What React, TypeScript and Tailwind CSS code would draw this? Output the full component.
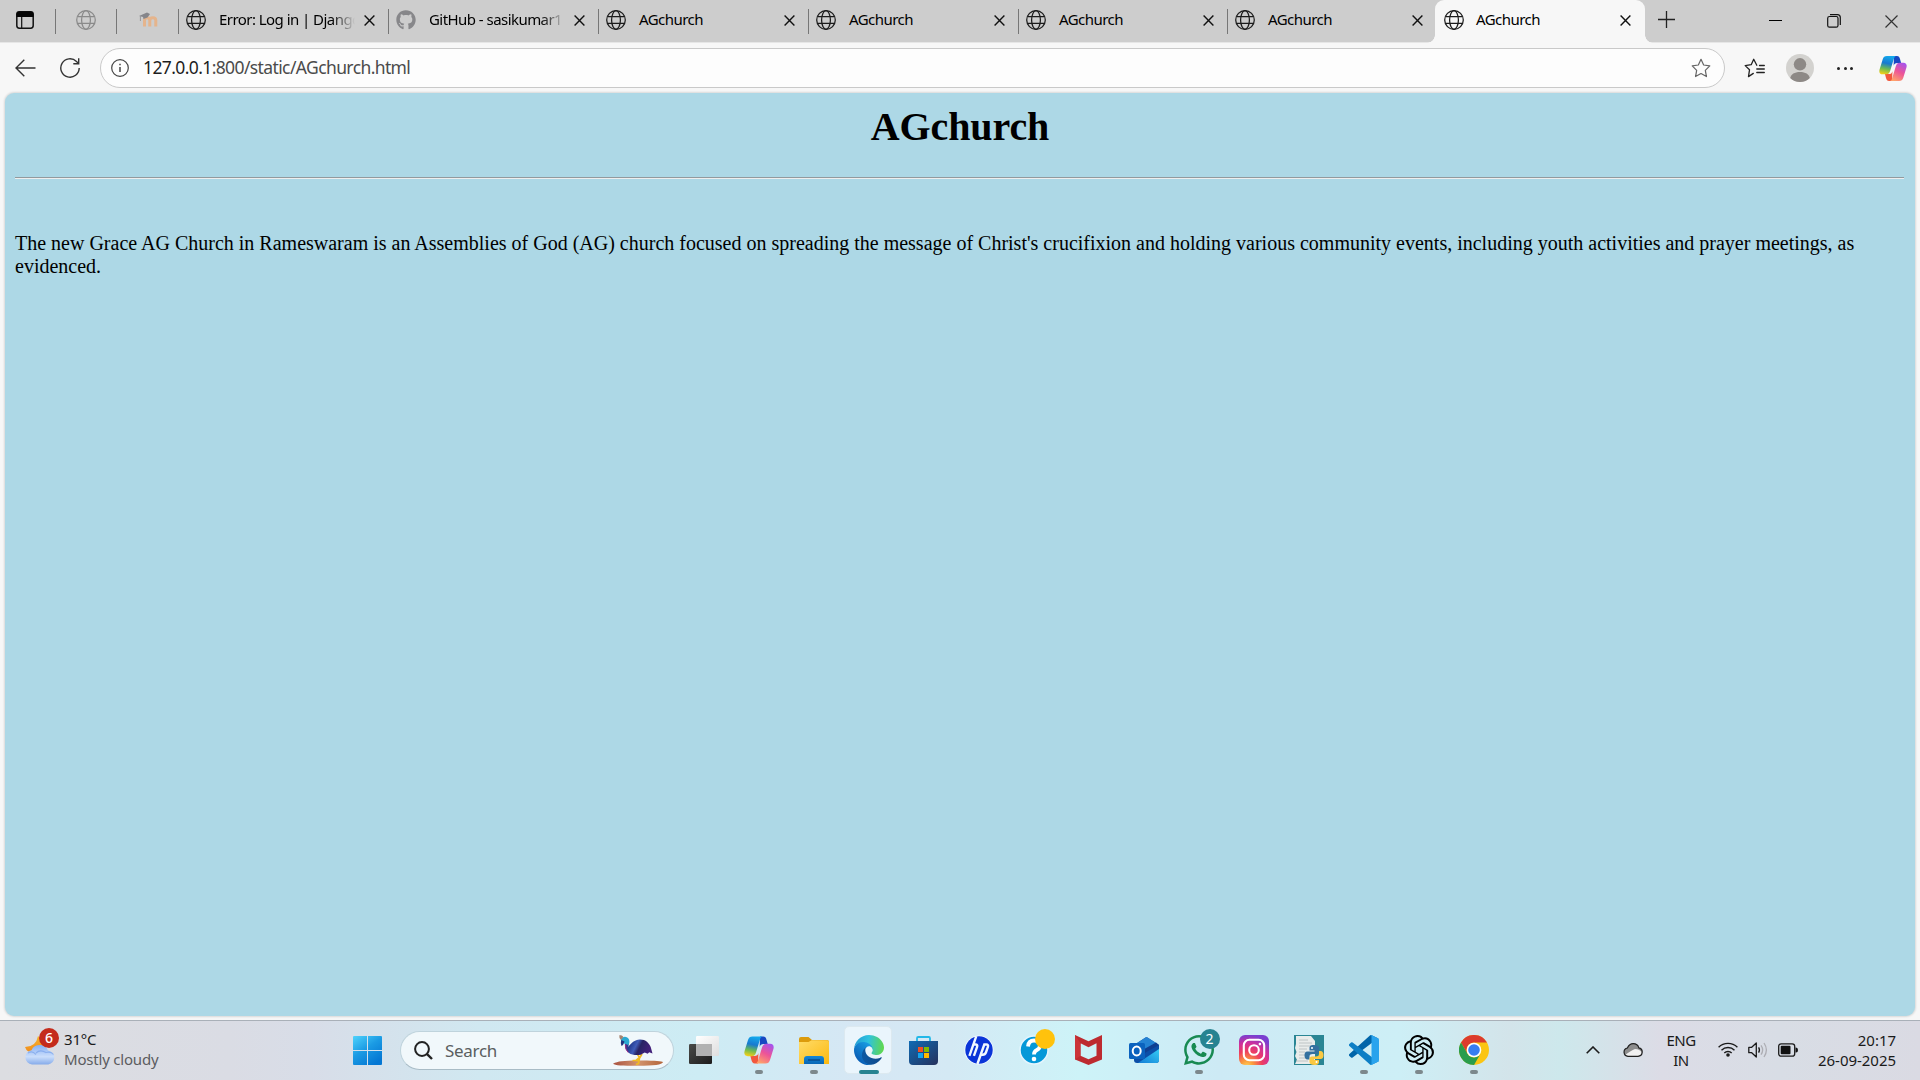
import React from "react";
import { FaGithub, FaWhatsapp } from "react-icons/fa";
import { SiOpenai } from "react-icons/si";

type TabInfo = { title: string; icon: "globe" | "github"; width: string; fade?: boolean };

const tabs: TabInfo[] = [
  { title: "Error: Log in | Django", icon: "globe", width: "w-[210px]", fade: true },
  { title: "GitHub - sasikumar1", icon: "github", width: "w-[210px]", fade: true },
  { title: "AGchurch", icon: "globe", width: "w-[210px]" },
  { title: "AGchurch", icon: "globe", width: "w-[210px]" },
  { title: "AGchurch", icon: "globe", width: "w-[209px]" },
  { title: "AGchurch", icon: "globe", width: "w-[208px]" },
];

function Globe({ className = "" }: { className?: string }) {
  return (
    <svg viewBox="0 0 20 20" className={`size-5 shrink-0 ${className}`} fill="none" stroke="currentColor" strokeWidth="1.25">
      <circle cx="10" cy="10" r="9.3" />
      <ellipse cx="10" cy="10" rx="4.4" ry="9.3" />
      <path d="M1.6 6.6h16.8M1.6 13.4h16.8" />
    </svg>
  );
}

function Cross({ className = "size-[11px]" }: { className?: string }) {
  return (
    <svg viewBox="0 0 11 11" className={`shrink-0 ${className}`} fill="none" stroke="#111" strokeWidth="1.4">
      <path d="M.6.6l9.8 9.8M10.4.6L.6 10.4" />
    </svg>
  );
}

function Moodle() {
  return (
    <svg viewBox="0 0 20 20" className="size-5" fill="none">
      <path d="M4.5 16V10q0-2.8 2.6-2.8T9.8 10v6M9.8 16v-6q0-2.8 3-2.8t3 2.8v6" transform="translate(2 .5)" stroke="#e5b48c" strokeWidth="3" />
      <path d="M1 6l8-3.5 3 1.5-2.5 3.5-4 1.5-.5-2z" fill="#85858a" />
      <path d="M2.4 6v5" stroke="#96969a" />
    </svg>
  );
}

function Copilot({ className }: { className: string }) {
  const id = React.useId();
  return (
    <svg viewBox="0 0 30 28" className={className}>
      <defs>
        <linearGradient id={id + "a"} x1=".5" y1="0" x2=".3" y2="1">
          <stop offset="0" stopColor="#13a9ec" />
          <stop offset=".4" stopColor="#1879d0" />
          <stop offset=".7" stopColor="#6cbb52" />
          <stop offset="1" stopColor="#f3cf18" />
        </linearGradient>
        <linearGradient id={id + "b"} x1=".8" y1="0" x2=".3" y2="1">
          <stop offset="0" stopColor="#a553ee" />
          <stop offset=".5" stopColor="#ed5497" />
          <stop offset="1" stopColor="#ffa36a" />
        </linearGradient>
      </defs>
      <path d="M16 .5h3.200c2 0 2.700 1.200 3.300 3.200l1.200 4.300h-4c-2.500 0-3.300.8-4 3z" fill="#1748c2" />
      <path d="M14 27.500h-3.200c-2 0-2.700-1.200-3.300-3.200L6.400 20h4c2.500 0 3.300-.8 4-3z" fill="#f2583e" />
      <path d="M8.500.5h10c-1.500.3-2.100 1.500-2.700 3.400L12 16.500c-.8 2.600-2 3.700-4.400 3.700H3.800C.7 20.200-.2 17.800.6 15L4 4C4.800 1.600 6 .5 8.500.5z" fill={`url(#${id}a)`} />
      <path d="M21.500 27.500h-10c1.500-.3 2.100-1.500 2.700-3.400L18 11.500c.8-2.600 2-3.700 4.400-3.700h3.800c3.100 0 4 2.400 3.200 5.200L26 24c-.8 2.400-2 3.500-4.500 3.500z" fill={`url(#${id}b)`} />
    </svg>
  );
}

function TabBar() {
  return (
    <div className="flex h-[42px] shrink-0 items-start bg-[#cdcdcd]">
      <div className="flex h-10 w-[55px] items-center justify-start pl-4">
        <svg viewBox="0 0 18 18" className="size-[18px]" fill="none">
          <rect x=".8" y=".8" width="16.400" height="16.400" rx="2.600" stroke="#111" strokeWidth="1.500" />
          <path d="M.5 6V3.300Q.5.5 3.300.5h11.400q2.800 0 2.800 2.800V6z" fill="#050505" />
          <path d="M5.700 6v11" stroke="#111" strokeWidth="1.200" />
        </svg>
      </div>
      <div className="flex h-[42px] w-[61px] items-start pt-[9px]">
        <div className="h-[25px] w-px bg-[#777]" />
        <Globe className="ml-[20px] mt-px text-[#8a8a8a]" />
      </div>
      <div className="flex h-[42px] w-[62px] items-start pt-[9px]">
        <div className="h-[25px] w-px bg-[#777]" />
        <div className="ml-[21px] mt-px"><Moodle /></div>
      </div>
      {tabs.map((t, i) => (
        <div key={i} className={`flex h-[42px] shrink-0 items-start pt-[9px] ${t.width}`}>
          <div className="h-[25px] w-px shrink-0 bg-[#777]" />
          {t.icon === "globe" ? <Globe className="ml-[7px] mt-px text-[#1c1c1c]" /> : <FaGithub className="ml-[7px] mt-px size-5 shrink-0 text-[#87878a]" />}
          <div className={`ml-[13px] h-5 w-[143px] shrink-0 whitespace-nowrap text-[15px] leading-[20px] tracking-[-0.55px] text-black ${t.fade ? "[mask-image:linear-gradient(to_right,black_112px,transparent_136px)]" : ""}`}>{t.title}</div>
          <Cross className={i >= 4 ? "ml-px mt-[6px] size-[11px]" : "ml-[2px] mt-[6px] size-[11px]"} />
        </div>
      ))}
      <div className="relative flex h-[43px] w-[210px] shrink-0 items-start rounded-t-[9px] bg-[#f7f7f7] pt-[9px]">
        <div className="absolute -left-2 bottom-0 size-2 bg-[radial-gradient(circle_at_0_0,transparent_7.5px,#f7f7f7_8px)]" />
        <div className="absolute -right-2 bottom-0 size-2 bg-[radial-gradient(circle_at_100%_0,transparent_7.5px,#f7f7f7_8px)]" />
        <Globe className="ml-[9px] mt-px text-[#1c1c1c]" />
        <div className="ml-[12px] h-5 w-[134px] shrink-0 whitespace-nowrap text-[15px] leading-[20px] tracking-[-0.55px] text-black">AGchurch</div>
        <Cross className="ml-[10px] mt-[6px] size-[11px]" />
      </div>
      <svg viewBox="0 0 17 17" className="ml-[13px] mt-[11px] size-[17px]" stroke="#222" strokeWidth="1.300"><path d="M8.500 0v17M0 8.500h17" /></svg>
      <div className="ml-auto flex items-start pr-[22px]">
        <div className="mr-[45px] mt-[20px] h-px w-[13px] bg-black" />
        <svg viewBox="0 0 14 14" className="mr-[44px] mt-[14px] size-[14px]" fill="none" stroke="#111" strokeWidth="1.200">
          <rect x=".7" y="2.500" width="10.300" height="10.700" rx="1.800" />
          <path d="M3 .7h7.400q2.900 0 2.900 2.900V11" />
        </svg>
        <svg viewBox="0 0 13 13" className="mt-[15px] size-[13px]" stroke="#333" strokeWidth="1.200"><path d="M.5.5l12 12M12.500.5l-12 12" /></svg>
      </div>
    </div>
  );
}

const STAR = "M9 1.200l2.400 5.100 5.500.8-4 4 1 5.600L9 14l-4.900 2.700 1-5.600-4-4 5.500-.8z";

function Toolbar() {
  return (
    <div className="flex h-[51px] shrink-0 items-center border-t border-[#e6e6e6] bg-[#f7f7f7]">
      <svg viewBox="0 0 21 18" className="-mt-px ml-[15px] h-[18px] w-[21px]" fill="none" stroke="#333" strokeWidth="1.400"><path d="M9.300.7L1 9l8.300 8.300M1 9h19.500" /></svg>
      <svg viewBox="0 0 20 20" className="ml-[24px] h-5 w-5" fill="none" stroke="#333" strokeWidth="1.400"><path d="M19.200 10a9.200 9.200 0 1 1-2.700-6.500L18.500 5.500M18.700.3v5.400h-5.400" /></svg>
      <div className="ml-[20px] flex h-[40px] w-[1625px] items-center rounded-full border border-[#c9c9c9] bg-[#fdfdfd]">
        <svg viewBox="0 0 18 18" className="ml-[10px] size-[18px]" fill="none" stroke="#444" strokeWidth="1.200"><circle cx="9" cy="9" r="8.300" /><path d="M9 8v5M9 4.800v1.500" strokeWidth="1.500" /></svg>
        <div className="-mt-[2px] ml-[14px] whitespace-nowrap text-[17.500px] leading-6 tracking-[-0.61px] text-[#4b4b4b]"><span className="text-[#1d1d1d]">127.0.0.1</span>:800/static/AGchurch.html</div>
        <svg viewBox="0 0 18 18" className="ml-auto mr-[13px] size-[20px]" fill="none" stroke="#666" strokeWidth="1.100" strokeLinejoin="round"><path d={STAR} /></svg>
      </div>
      <svg viewBox="0 0 21 20" className="ml-[19px] h-5 w-[21px]" fill="none" stroke="#222" strokeWidth="1.300" strokeLinejoin="round" strokeLinecap="round"><path d="M12.800 7.200L9.700 1.300 7.200 6.700l-6 .9 4.300 4.200-1 6.800 4.800-3.200M15.500 7.500h4.800M12.800 11h7.500M12.800 14.500h7.500" /></svg>
      <svg viewBox="0 0 28 28" className="ml-[21px] size-7"><circle cx="14" cy="14" r="14" fill="#d3d2cf" /><circle cx="14" cy="10.300" r="6.200" fill="#8d8986" /><path d="M4.200 24C5 20.300 8.500 18 14 18s9 2.300 9.800 6A14 14 0 0 1 4.200 24z" fill="#8d8986" /></svg>
      <div className="ml-[23px] flex w-[16px] justify-between"><i className="size-[3px] rounded-full bg-[#222]" /><i className="size-[3px] rounded-full bg-[#222]" /><i className="size-[3px] rounded-full bg-[#222]" /></div>
      <Copilot className="ml-[26px] h-[27px] w-[28px]" />
    </div>
  );
}

function Weather() {
  return (
    <svg viewBox="0 0 34 38" className="h-[38px] w-[34px]">
      <defs>
        <linearGradient id="wc" x1="0" y1="0" x2="0" y2="1"><stop offset="0" stopColor="#86b0f4" /><stop offset=".6" stopColor="#cbdefb" /><stop offset="1" stopColor="#85abea" /></linearGradient>
        <linearGradient id="wm" x1="0" y1="0" x2="0" y2="1"><stop offset="0" stopColor="#f8b42c" /><stop offset="1" stopColor="#ef8a1c" /></linearGradient>
      </defs>
      <path d="M13 7q-2 11-13 11 2 6 9 6 12 0 13-9z" fill="url(#wm)" />
      <path d="M7 35.500a7.200 7.200 0 0 1-.5-14.300C8 17.600 11 16 14.800 16c4.300 0 7.200 2.400 8.200 5.600a7 7 0 0 1 .3 13.900z" fill="url(#wc)" />
      <path d="M3 24q4-3 8 1.500M11 24q4-4 10-.5 5-1.500 7.500 2" fill="none" stroke="#729ce8" strokeOpacity=".6" strokeWidth="1.200" />
    </svg>
  );
}

function StartIcon() {
  return (
    <svg viewBox="0 0 29 29" className="size-[29px]">
      <defs><linearGradient id="st" gradientUnits="userSpaceOnUse" x1="0" y1="0" x2="20" y2="29"><stop offset="0" stopColor="#4fd3fc" /><stop offset=".5" stopColor="#1b9be4" /><stop offset="1" stopColor="#0477d3" /></linearGradient></defs>
      <path d="M1 0h13v14H0V1q0-1 1-1zM15 0h13q1 0 1 1v13H15zM0 15h14v14H1q-1 0-1-1zM15 15h14v13q0 1-1 1H15z" fill="url(#st)" />
    </svg>
  );
}

function Bird() {
  return (
    <svg viewBox="0 0 50 31" className="h-[31px] w-[50px]">
      <defs>
        <linearGradient id="bd" x1="0" y1="0" x2="1" y2=".3"><stop offset="0" stopColor="#5a2a84" /><stop offset=".3" stopColor="#243c91" /><stop offset=".5" stopColor="#3f5cb8" /><stop offset=".65" stopColor="#282464" /><stop offset="1" stopColor="#43217a" /></linearGradient>
        <linearGradient id="bg" x1="0" y1="0" x2="1" y2="0"><stop offset="0" stopColor="#a9513e" /><stop offset=".5" stopColor="#d2946e" /><stop offset="1" stopColor="#b4653a" /></linearGradient>
      </defs>
      <path d="M0 28.800c5-2.600 10-3 25-3.200s24 .6 25 1.700c-1 2.400-9 3.500-25 3.500S2 30.500 0 28.800z" fill="url(#bg)" />
      <path d="M24 18.500l2.500 4-3.500 3h-3.500M29 19l-2.500 4-1 5.500-2.500 1M23 25.500l3 .5" fill="none" stroke="#f1ba22" strokeWidth="1.700" strokeLinejoin="round" />
      <path d="M11.500 3c4 .6 4.800 4 4.300 6.500l-.6 2.500c3-4 6.500-7.300 11.500-7.500 6-.2 9.300 3.500 11 7.500l1.800 6.500-3.300-1.300-1.500 1.500-3-1.200-4 2.200c-4 .8-9 .4-11.700-1.700-4-3-4.700-7.500-3.700-11z" fill="url(#bd)" />
      <path d="M7.800 4.500C9.300 1 14.300.8 16 4.500c.8 2 .4 4-.5 5.500L11 8.500 8.500 8z" fill="#2aa9d2" />
      <path d="M6.300.3c1.700-.2 3.500.2 4 1.700L8 5 6.500 3z" fill="#a58370" />
      <path d="M8.300 5l3.200 1.500L10 10l-1.500 1L7.800 8z" fill="#21347f" />
      <path d="M12.500 9.500q-.5 5 2.700 8" fill="none" stroke="#a12b88" strokeWidth="1" />
    </svg>
  );
}

function TaskView() {
  return (
    <svg viewBox="0 0 30 28" className="h-7 w-[30px]">
      <defs><linearGradient id="tv" x1="0" y1="0" x2="1" y2="1"><stop offset="0" stopColor="#4a4a48" /><stop offset="1" stopColor="#1c1c1c" /></linearGradient><linearGradient id="tw" x1="0" y1="0" x2="1" y2="1"><stop offset="0" stopColor="#fff" /><stop offset="1" stopColor="#dedede" /></linearGradient></defs>
      <rect y="8" width="23" height="20" rx="1.200" fill="url(#tv)" />
      <rect x="7" y="0" width="23" height="20" rx="1.200" fill="url(#tw)" />
      <path d="M7 8h16v12H8q-1 0-1-1z" fill="#b1b1b1" />
    </svg>
  );
}

function Folder() {
  return (
    <svg viewBox="0 0 30 27" className="h-[27px] w-[30px]">
      <defs><linearGradient id="fo" x1="0" y1="0" x2="1" y2="1"><stop offset="0" stopColor="#ffdc69" /><stop offset="1" stopColor="#fbb90f" /></linearGradient><linearGradient id="fb" x1="0" y1="0" x2="0" y2="1"><stop offset="0" stopColor="#1387d8" /><stop offset="1" stopColor="#0866b5" /></linearGradient></defs>
      <path d="M0 2q0-2 2-2h7.500l3.500 3h15q2 0 2 2v5H0z" fill="#dc9b0c" />
      <path d="M0 5h9.500l3-1.800H28q2 0 2 2V27H0z" fill="url(#fo)" />
      <path d="M5 27v-5q0-3 3-3h14q3 0 3 3v5z" fill="url(#fb)" />
      <path d="M9 23h12" stroke="#08498a" strokeWidth="1.400" />
    </svg>
  );
}

function Edge() {
  return (
    <svg viewBox="0 0 256 256" className="size-[30px]">
      <defs>
        <linearGradient id="e1" x1="60" y1="178" x2="240" y2="178" gradientUnits="userSpaceOnUse"><stop offset="0" stopColor="#0c59a4" /><stop offset="1" stopColor="#114a8b" /></linearGradient>
        <linearGradient id="e2" x1="150" y1="90" x2="45" y2="210" gradientUnits="userSpaceOnUse"><stop offset="0" stopColor="#1b9de2" /><stop offset=".4" stopColor="#1385d2" /><stop offset="1" stopColor="#0b62b8" /></linearGradient>
        <linearGradient id="e3" x1="10" y1="70" x2="250" y2="100" gradientUnits="userSpaceOnUse"><stop offset="0" stopColor="#249fd5" /><stop offset=".45" stopColor="#2fc2df" /><stop offset="1" stopColor="#5fd84f" /></linearGradient>
      </defs>
      <path fill="url(#e1)" d="M231 190.500c-3.400 1.800-6.900 3.400-10.500 4.700-11.500 4.300-23.600 6.500-35.900 6.500-47.300 0-88.500-32.500-88.500-74.300.1-11.400 6.400-21.900 16.400-27.300-42.800 1.800-53.800 46.400-53.800 72.500 0 73.900 68.100 81.400 82.800 81.400 7.900 0 19.800-2.300 27-4.600l1.300-.4c27.600-9.500 51-28.100 66.600-52.800 1.200-1.900.6-4.300-1.200-5.500-1.300-.8-2.900-.9-4.200-.2z" />
      <path fill="url(#e2)" d="M105.700 241.400c-8.900-5.500-16.600-12.800-22.700-21.300-26.300-36-18.400-86.500 17.600-112.800 3.800-2.700 7.700-5.200 11.900-7.200 3.100-1.500 8.400-4.100 15.500-4 10.100.1 19.600 4.900 25.700 13 4 5.400 6.300 11.900 6.400 18.700 0-.2 24.500-79.600-80-79.600-43.900 0-80 41.700-80 78.200-.2 19.300 4 38.500 12.100 56 27.600 58.800 94.800 87.600 156.400 67.100-21.100 6.600-44.100 3.700-62.900-8.100z" />
      <path fill="url(#e3)" d="M152.300 148.900c-.8 1-3.300 2.500-3.300 5.700 0 2.600 1.700 5.100 4.700 7.200 14.400 10 41.500 8.700 41.600 8.700 10.700 0 21.100-2.900 30.300-8.300 18.800-11 30.400-31.100 30.400-52.900.3-22.400-8-37.300-11.300-43.900C223.500 23.900 177.700 0 128 0 58 0 1 56.200 0 126.200c.5-36.500 36.800-66 80-66 3.500 0 23.500.3 42 10.100 16.300 8.600 24.900 18.900 30.800 29.200 6.200 10.700 7.300 24.100 7.300 29.500s-2.700 13.300-7.800 19.900z" />
    </svg>
  );
}

function Store() {
  return (
    <svg viewBox="0 0 29 29" className="size-[29px]">
      <defs><linearGradient id="so" x1="0" y1="0" x2="1" y2="1"><stop offset="0" stopColor="#0f6bb4" /><stop offset="1" stopColor="#26315c" /></linearGradient></defs>
      <path d="M8 6V2.200Q8 1 9.200 1h10.600Q21 1 21 2.200V6" fill="none" stroke="#22b8e8" strokeWidth="1.800" />
      <path d="M0 5h29v20q0 4-4 4H4q-4 0-4-4z" fill="url(#so)" />
      <path fill="#f25022" d="M9 11h5v5H9z" /><path fill="#7fba00" d="M15 11h5v5h-5z" /><path fill="#11a4ef" d="M9 17h5v5H9z" /><path fill="#ffb900" d="M15 17h5v5h-5z" />
    </svg>
  );
}

function Hp() {
  return (
    <svg viewBox="0 0 30 30" className="size-[30px]" fill="none">
      <circle cx="15" cy="15" r="14.600" fill="#f1f8ff" />
      <circle cx="15" cy="15" r="13.700" fill="#0a35d8" />
      <path d="M12.300 1.200L5.400 20.800M9.300 9.500h2.300q2.300 0 1.500 2.300l-3.200 9" stroke="#f1f8ff" strokeWidth="2.400" />
      <path d="M13.400 29L20.300 9.500h2q2.400 0 1.600 2.300l-2 5.700q-.8 2.200-3.100 2.200h-2.300" stroke="#f1f8ff" strokeWidth="2.400" />
    </svg>
  );
}

function Help() {
  return (
    <div className="relative size-[30px]">
      <svg viewBox="0 0 30 30" className="size-[30px]" fill="none"><circle cx="15" cy="15" r="14" fill="#0598d8" stroke="#e5f5fd" strokeWidth="1.500" /><path d="M9 11.500Q9.500 5.500 15 5.500t6 5q0 3-3.500 4.800Q15 16.600 15 19.500" stroke="#fff" strokeWidth="3.800" /><circle cx="15" cy="24" r="2.300" fill="#fff" /></svg>
      <div className="absolute left-[16px] top-[-6px] size-5 rounded-full bg-[#ffc20c]" />
    </div>
  );
}

function McAfee() {
  return (
    <svg viewBox="0 0 27 30" className="h-[30px] w-[27px]">
      <path d="M0 0l13.500 6.300L27 0v24.500L13.500 30 0 24.500zM5.500 8.300v12.400l8 3.600 8-3.600V8.300l-8 4z" fill="#bd2b30" fillRule="evenodd" />
      <path d="M0 0l5.500 8.300v12.400L0 24.500z" fill="#cb3439" />
    </svg>
  );
}

function Outlook() {
  return (
    <svg viewBox="0 0 30 27" className="h-[27px] w-[30px]">
      <defs><linearGradient id="ol" x1="0" y1="1" x2="1" y2="0"><stop offset="0" stopColor="#137cd5" /><stop offset="1" stopColor="#35cdf5" /></linearGradient></defs>
      <path d="M5 8L16.500.5q1-.6 2 0L30 8v15q0 3-3 3H8q-3 0-3-3z" fill="#0c4ea7" />
      <path d="M5 8L16.500.5q1-.6 2 0L28 6.500 12 17z" fill="#2483d4" />
      <path d="M30 8L12 18l-4-2L27 5.500z" fill="#0f3e91" />
      <path d="M30 12v11q0 3-3 3H9z" fill="url(#ol)" />
      <rect y="6" width="16" height="16" rx="1.500" fill="#0b62be" />
      <ellipse cx="7.700" cy="14" rx="4" ry="4.500" fill="none" stroke="#fff" strokeWidth="2" />
    </svg>
  );
}

function WhatsApp() {
  return (
    <div className="relative size-[30px]">
      <FaWhatsapp viewBox="0 32 448 448" className="size-[30px] text-[#188a52]" />
      <div className="absolute left-[16px] top-[-6px] flex size-5 items-center justify-center rounded-full bg-[#278391] text-[14px] leading-none text-white">2</div>
    </div>
  );
}

function Instagram() {
  return (
    <svg viewBox="0 0 30 30" className="size-[30px]" fill="none">
      <defs>
        <radialGradient id="ig" cx=".27" cy="1.050" r="1.050"><stop offset="0" stopColor="#ffd35a" /><stop offset=".2" stopColor="#fb9b3c" /><stop offset=".48" stopColor="#ee3e5f" /><stop offset=".75" stopColor="#ce309c" /><stop offset="1" stopColor="#7a3fd0" /></radialGradient>
      </defs>
      <rect width="30" height="30" rx="6" fill="url(#ig)" />
      <rect x="4.800" y="4.800" width="20.400" height="20.400" rx="5.500" stroke="#fff" strokeWidth="2.100" />
      <circle cx="15" cy="15" r="4.800" stroke="#fff" strokeWidth="2.100" /><circle cx="20.900" cy="9.100" r="1.300" fill="#fff" />
    </svg>
  );
}

function PyNotes() {
  return (
    <svg viewBox="0 0 30 30" className="size-[30px]">
      <path fill="#2a8594" d="M0 0h30v30H0z" />
      <path d="M2 1h15l4 5v23H1l2-4-2-4 1.500-4L1 13l1-4z" fill="#e9eceb" />
      <path d="M5 5h9M5 8h13M5 11h13M5 14h8M5 17h6M5 20h6M5 23h9M2 26h12" stroke="#bec4c5" strokeWidth="1" />
      <path d="M20 10c-4 0-4.500 1.500-4.500 3v2.500h5v1h-7c-2.500 0-3 2-3 4s1 4 3 4h2v-3c0-1.800 1.500-2.500 3-2.500h4c1.500 0 2.500-1 2.500-2.500V13c0-2-2-3-5-3z" fill="#34709f" />
      <path d="M20.500 30c4 0 4.500-1.500 4.500-3v-2h-5v-1h6.500c2.500 0 3-2 3-4s-1-4-3-4H25v3c0 1.800-1.500 2.500-3 2.500h-4c-1.500 0-2.500 1-2.500 2.500v3c0 2 2 3 5 3z" fill="#fac842" />
      <circle cx="18" cy="13" r="1" fill="#fff" /><circle cx="22.500" cy="27" r="1" fill="#fff" />
    </svg>
  );
}

function VsCode() {
  return (
    <svg viewBox="0 0 100 100" className="size-[30px]">
      <path d="M96.500 10.800L75.900.9a6.200 6.200 0 0 0-7.100 1.200L1.300 63.500a4.200 4.200 0 0 0 0 6.200l5.500 5a4.200 4.200 0 0 0 5.300.2L93.400 13.400A4.100 4.100 0 0 1 100 16.700v-.2a6.200 6.200 0 0 0-3.500-5.700z" fill="#0065a9" />
      <path d="M96.500 89.200L75.900 99.100a6.200 6.200 0 0 1-7.100-1.200L1.300 36.500a4.200 4.200 0 0 1 0-6.200l5.500-5a4.200 4.200 0 0 1 5.300-.2l81.300 61.500A4.100 4.100 0 0 0 100 83.300v.2a6.200 6.200 0 0 1-3.500 5.700z" fill="#0d7fc5" />
      <path d="M75.900 99.100a6.200 6.200 0 0 1-7.100-1.200c2.300 2.300 6.200.7 6.200-2.600V4.700c0-3.300-3.900-4.900-6.200-2.600A6.200 6.200 0 0 1 75.900.9l20.600 9.900a6.200 6.200 0 0 1 3.500 5.700v67a6.200 6.200 0 0 1-3.500 5.700z" fill="#29a3ed" />
    </svg>
  );
}

function Chrome() {
  return (
    <svg viewBox="0 0 30 30" className="size-[30px]">
      <circle cx="15" cy="15" r="15" fill="#fbc513" />
      <path d="M2 7.500A15 15 0 0 1 28 7.500H15A7.500 7.500 0 0 0 8.500 18.700z" fill="#dc3b2d" />
      <path d="M2 7.500L8.500 18.750A7.500 7.500 0 0 0 21.500 18.750L15 30A15 15 0 0 1 2 7.500z" fill="#2a9d4b" />
      <circle cx="15" cy="15" r="7.300" fill="#fff" /><circle cx="15" cy="15" r="5.800" fill="#377df0" />
    </svg>
  );
}

const apps: { icon: React.ReactNode; running?: boolean; active?: boolean }[] = [
  { icon: <TaskView /> },
  { icon: <Copilot className="h-[28px] w-[30px]" />, running: true },
  { icon: <Folder />, running: true },
  { icon: <Edge />, active: true },
  { icon: <Store /> },
  { icon: <Hp /> },
  { icon: <Help /> },
  { icon: <McAfee /> },
  { icon: <Outlook /> },
  { icon: <WhatsApp />, running: true },
  { icon: <Instagram /> },
  { icon: <PyNotes /> },
  { icon: <VsCode />, running: true },
  { icon: <SiOpenai className="size-[30px] text-black" />, running: true },
  { icon: <Chrome />, running: true },
];

function Tray() {
  return (
    <div className="ml-auto flex h-full items-center pb-[2px] pr-[24px] text-[#1a1a1a]">
      <svg viewBox="0 0 14 8" className="mr-[23px] h-2 w-[14px]" fill="none" stroke="#1c1c1c" strokeWidth="1.600"><path d="M.7 7.300L7 1l6.300 6.300" /></svg>
      <svg viewBox="0 0 20 14" className="mr-[23px] h-[14px] w-5">
        <path d="M5 13.300a4.200 4.200 0 0 1-.6-8.300C5.800 2 7.700.7 10.200.7c2.800 0 4.900 1.500 5.600 4.100a4.300 4.300 0 0 1-.8 8.500z" fill="#8d8d8d" />
        <path d="M2 12q7-5 10-6 5 0 7 4-1 3-4 3.300H5Q3 13 2 12z" fill="#f1f1f1" />
        <path d="M5 13.300a4.200 4.200 0 0 1-.6-8.300C5.800 2 7.700.7 10.200.7c2.800 0 4.900 1.500 5.600 4.100a4.300 4.300 0 0 1-.8 8.500z" fill="none" stroke="#202020" strokeWidth="1.200" />
      </svg>
      <div className="w-[30px] text-center text-[15px] leading-[20px] tracking-[-0.5px]">ENG<br />IN</div>
      <svg viewBox="0 0 20 15" className="ml-[22px] h-[15px] w-5" fill="none" stroke="#1b1b1b" strokeWidth="1.400"><path d="M.6 5.300a13.300 13.300 0 0 1 18.800 0M3.500 8.200a9.200 9.200 0 0 1 13 0M6.300 11a5.200 5.200 0 0 1 7.400 0" /><circle cx="10" cy="13" r="1.800" fill="#1b1b1b" stroke="none" /></svg>
      <svg viewBox="0 0 20 16" className="ml-[10px] h-4 w-5" fill="none" stroke="#1b1b1b" strokeWidth="1.300"><path d="M.8 5.300h2.900L8.300 1v14L3.700 10.700H.8z" strokeLinejoin="round" /><path d="M10.600 5.300q1.700 2.700 0 5.400" /><path d="M13 3.300q3.300 4.700 0 9.400M16 1q4.800 7 0 14" stroke="#adadb3" /></svg>
      <svg viewBox="0 0 20 14" className="ml-[10px] h-[14px] w-5" fill="none"><rect x=".7" y=".8" width="16" height="12.400" rx="2.500" stroke="#1b1b1b" strokeWidth="1.300" /><rect x="2.700" y="2.800" width="9.800" height="8.400" rx="1" fill="#111" /><path d="M17.500 4.500H18q2 0 2 2.500t-2 2.500h-.5z" fill="#111" /></svg>
      <div className="ml-[20px] whitespace-nowrap text-right text-[15px] leading-[20px] tracking-[-0.03px]">20:17<br />26-09-2025</div>
    </div>
  );
}

function Taskbar() {
  return (
    <div className="flex h-[60px] shrink-0 items-center border-t border-[#a9b0b8] bg-[linear-gradient(to_right,#dcdde1_0px,#dadce4_230px,#d8dde8_310px,#d0e8f1_480px,#cdecf4_700px,#d6e7f4_860px,#d4e9f4_950px,#cdf3f8_1080px,#cdeaf5_1220px,#cdeff6_1400px,#d3e4ea_1510px,#cde8ec_1560px,#dcdce6_1660px,#d8dde5_1780px,#dadae3_1920px)]">
      <div className="flex w-[327px] items-center pb-[4px] pl-[25px]">
        <div className="relative -mt-[2px]"><Weather /><div className="absolute left-[14px] top-[-1px] flex size-5 items-center justify-center rounded-full bg-[#c42b1c] text-[14px] font-medium leading-none text-white">6</div></div>
        <div className="ml-[5px] whitespace-nowrap text-[15px] leading-[20px] tracking-[-0.2px]"><div className="text-[#1a1a1a]">31°C</div><div className="text-[#5b5c60]">Mostly cloudy</div></div>
      </div>
      <div className="ml-[26px]"><StartIcon /></div>
      <div className="-mt-px ml-[18px] flex h-[39px] w-[274px] shrink-0 items-center rounded-full border border-b-[#a9bcc6] border-[#bfd3dc] bg-[#f1f8fb] pl-[13px] pr-[10px]">
        <svg viewBox="0 0 19 19" className="size-[19px]" fill="none" stroke="#222" strokeWidth="2"><circle cx="8" cy="8" r="6.900" /><path d="M12.800 12.800l5.200 5.200" strokeWidth="2.400" /></svg>
        <div className="ml-[12px] mt-px text-[17px] leading-6 tracking-[-0.3px] text-[#5a5e60]">Search</div>
        <div className="ml-auto"><Bird /></div>
      </div>
      <div className="-mt-px ml-[2px] flex">
        {apps.map((a, i) => (
          <div key={i} className="relative flex h-[48px] w-[55px] items-center justify-center">
            {a.active && <div className="absolute inset-y-0 left-[3px] w-[48px] rounded-[5px] border border-[#dce9f0] bg-[#eaf5fc]" />}
            <div className="relative">{a.icon}</div>
            {a.running && <div className="absolute bottom-0 left-[23.500px] h-1 w-2 rounded-full bg-[#7c888c]" />}
            {a.active && <div className="absolute bottom-0 left-[17.500px] h-1 w-5 rounded-full bg-[#278391]" />}
          </div>
        ))}
      </div>
      <Tray />
    </div>
  );
}

export default function App() {
  return (
    <div className="flex h-[1080px] w-[1920px] flex-col overflow-hidden bg-[#f7f7f7] font-['Noto_Sans',sans-serif]">
      <TabBar />
      <Toolbar />
      <main className="mx-[5px] mb-[4px] flex-1 rounded-[9px] bg-[#add8e6] px-[10px] font-['Liberation_Serif',serif] text-black shadow-[0_0_2px_1px_rgba(0,0,0,0.12)]">
        <h1 className="pt-[11px] text-center text-[40px] font-bold leading-[46px] tracking-[-0.1px]">AGchurch</h1>
        <div className="mr-px mt-[27px] h-[2px] border-t border-[#929a9e] bg-[#eeeeee]" />
        <p className="mt-[53px] text-[20px] leading-[23px]">The new Grace AG Church in Rameswaram is an Assemblies of God (AG) church focused on spreading the message of Christ's crucifixion and holding various community events, including youth activities and prayer meetings, as evidenced.</p>
      </main>
      <Taskbar />
    </div>
  );
}
